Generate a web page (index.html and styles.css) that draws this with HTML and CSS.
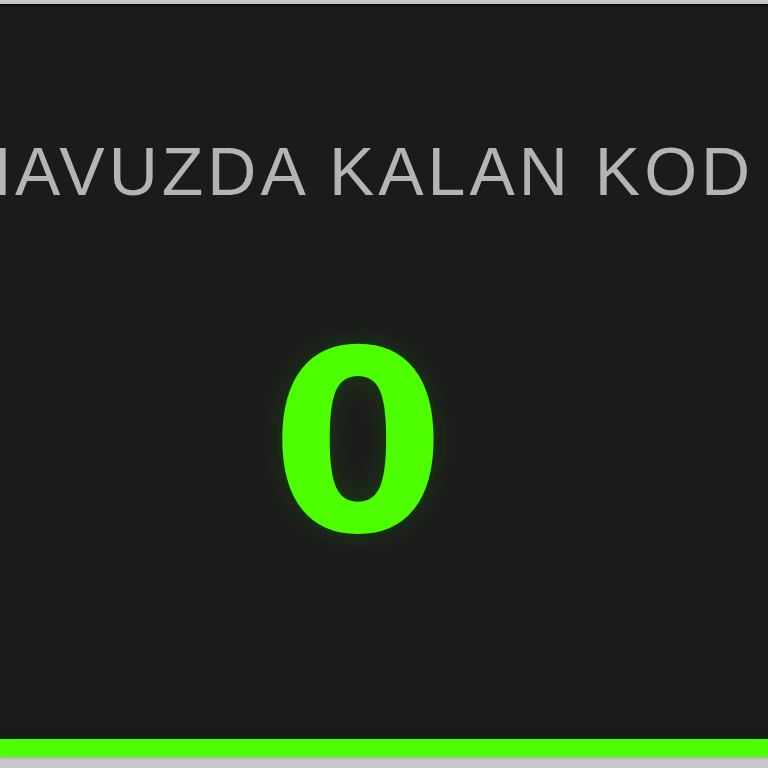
FILE: index.html
```html
<!DOCTYPE html>
<html lang="tr">
<head>
<meta charset="utf-8">
<link rel="stylesheet" href="styles.css">
</head>
<body>
<div class="topbar"></div>
<div class="card">
  <div class="content">
    <div class="label">HAVUZDA KALAN KOD</div>
    <div class="count">0</div>
  </div>
  <div class="accent"></div>
</div>
<div class="below"></div>
</body>
</html>
```
FILE: styles.css
```css
html, body {
  margin: 0;
  padding: 0;
  background: #c8c8cc;
  overflow: hidden;
  width: 768px;
  height: 768px;
}
.topbar {
  height: 4px;
  background: #c4c4c4;
  border-bottom: 2px solid #0d0d0d;
}
.card {
  background: #1b1b1b;
  height: 751px;
  display: flex;
  flex-direction: column;
}
.content {
  width: 716px;
  flex: 1;
  display: flex;
  flex-direction: column;
  align-items: center;
  padding-top: 120px;
  box-sizing: border-box;
}
.label {
  font-family: "Liberation Sans", Arial, sans-serif;
  font-size: 68px;
  letter-spacing: 4px;
  color: #b4b4b4;
  white-space: nowrap;
  line-height: 90px;
}
.count {
  margin-top: 101px;
  font-family: "DejaVu Sans", Verdana, sans-serif;
  font-weight: bold;
  font-size: 252px;
  line-height: 252px;
  color: #4dff00;
  text-shadow: 0 0 6px #0a3a00, 0 0 30px rgba(77, 255, 0, 0.15);
}
.accent {
  height: 18px;
  background: #4dff00;
  box-shadow: 0 -3px 6px rgba(0, 40, 0, 0.9);
}
.below {
  height: 11px;
  background: #c8c8cc;
}
```
